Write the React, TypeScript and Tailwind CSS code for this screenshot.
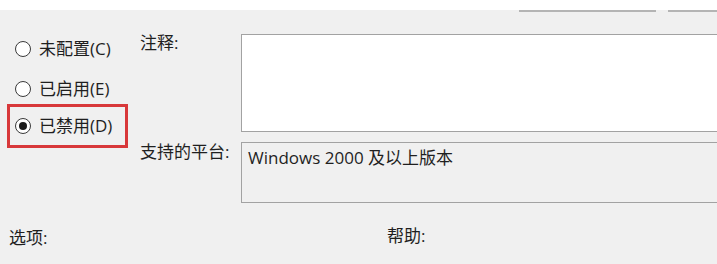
import React from "react";

const font = { fontFamily: '"Open Sans", "Noto Sans CJK SC", sans-serif' };

function Radio({ checked }: { checked?: boolean }) {
  return (
    <span className="flex h-[16px] w-[16px] shrink-0 items-center justify-center rounded-full border border-[#3a3a3a] bg-white">
      {checked && <span className="h-[8px] w-[8px] rounded-full bg-[#1a1a1a]" />}
    </span>
  );
}

export default function App() {
  return (
    <div
      className="flex h-[264px] w-[717px] flex-col overflow-hidden bg-[#f0f0f0] text-[17px] leading-[20px] text-[#1f1f1f]"
      style={font}
    >
      <div className="h-[10px] bg-white" />
      <div className="flex h-[2px]">
        <div className="w-[519px]" />
        <div className="w-[137px] border-t-2 border-[#b4b4b4]" />
        <div className="w-[12px]" />
        <div className="flex-1 border-t-2 border-[#b4b4b4]" />
      </div>
      <div className="flex">
        <div className="flex w-[140px] shrink-0 flex-col pt-[27px]">
          <div className="flex h-[20px] items-center gap-[8px] pl-[15px]">
            <Radio />
            <span>未配置(C)</span>
          </div>
          <div className="mt-[20px] flex h-[20px] items-center gap-[8px] pl-[15px]">
            <Radio />
            <span>已启用(E)</span>
          </div>
          <div className="ml-[7px] mt-[5px] flex h-[44px] w-[121px] items-center gap-[8px] border-[3px] border-[#d8383a] pl-[5px]">
            <Radio checked />
            <span>已禁用(D)</span>
          </div>
        </div>
        <div className="flex flex-1 flex-col pt-[22px]">
          <div className="flex items-start">
            <span className="-mt-[1px] w-[101px] shrink-0">注释:</span>
            <div className="-mr-[10px] h-[98px] flex-1 border border-[#a2a2a2] bg-white" />
          </div>
          <div className="mt-[10px] flex items-start">
            <span className="w-[101px] shrink-0">支持的平台:</span>
            <div className="-mr-[10px] h-[61px] flex-1 border border-[#a2a2a2] bg-[#f0f0f0] pl-[6px] pt-[5px]">
              Windows 2000 及以上版本
            </div>
          </div>
        </div>
      </div>
      <div className="mt-[23px] flex items-start">
        <span className="w-[387px] shrink-0 pl-[9px] pt-[2px]">选项:</span>
        <span>帮助:</span>
      </div>
    </div>
  );
}
